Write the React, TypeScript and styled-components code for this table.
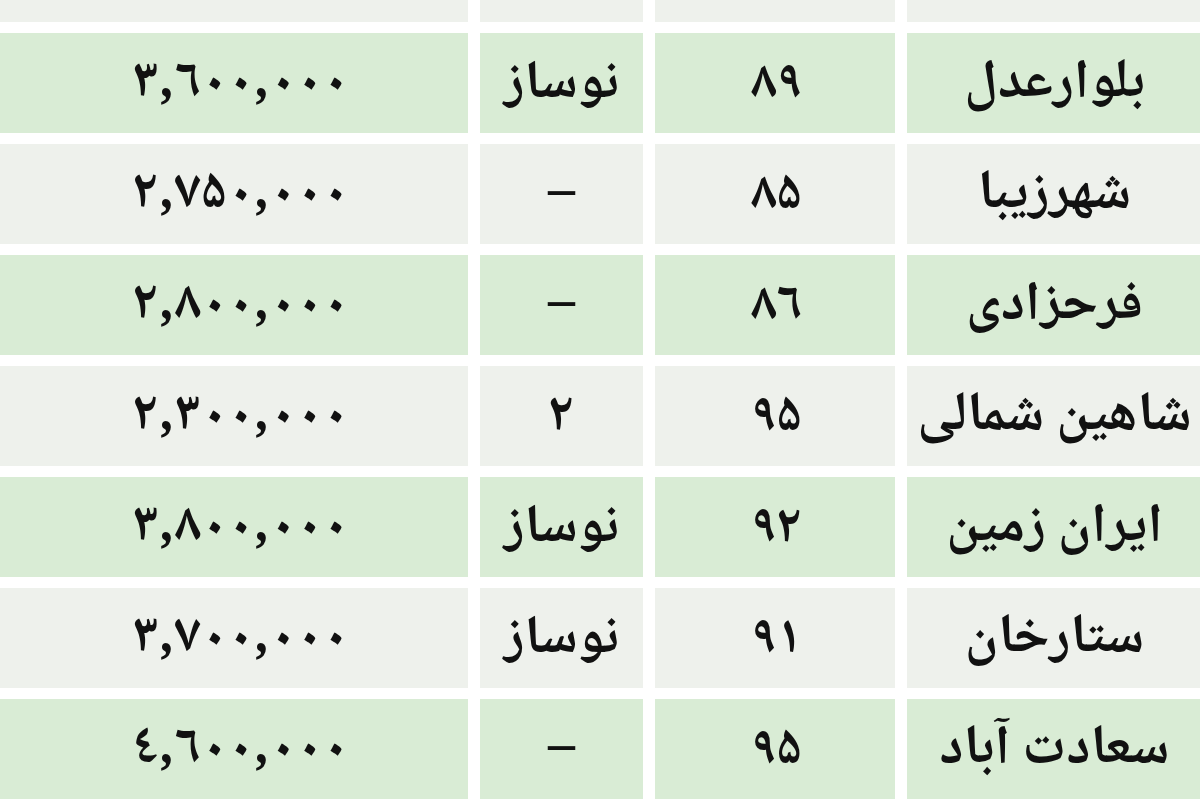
import React from "react";
import styled, { createGlobalStyle } from "styled-components";

const Global = createGlobalStyle`
  html, body {
    margin: 0;
    padding: 0;
    background: #ffffff;
    overflow: hidden;
  }
  body {
    width: 1200px;
    height: 800px;
  }
`;

const Table = styled.div`
  display: flex;
  flex-direction: column;
  gap: 11px;
  width: 1202px;
  margin-top: -78px;
  font-family: "Noto Naskh Arabic", "Noto Sans Arabic", "DejaVu Sans", sans-serif;
  color: #111;
`;

const Row = styled.div<{ $tone: "green" | "gray" }>`
  display: grid;
  grid-template-columns: 468px 163px 240px 295px;
  column-gap: 12px;
  height: 100px;
  --cell: ${(p) => (p.$tone === "green" ? "#d9ecd5" : "#eef1ec")};
`;

const sizes = { price: "54px", status: "54px", year: "53px", place: "55px" };
const spacing = { price: "13px", status: "0", year: "3px", place: "0" };

const Cell = styled.div<{ $kind: "price" | "status" | "year" | "place" }>`
  background: var(--cell);
  display: flex;
  align-items: center;
  justify-content: center;
  direction: rtl;
  font-weight: 700;
  font-size: ${(p) => sizes[p.$kind]};
  line-height: 1;
  white-space: nowrap;
  overflow: hidden;
  padding-top: ${(p) => (p.$kind === "price" ? "2px" : "4px")};
  box-sizing: border-box;
`;

const Spaced = styled.span<{ $gap: string }>`
  direction: ltr;
  unicode-bidi: isolate;
  letter-spacing: ${(p) => p.$gap};
  margin-right: calc(-1 * ${(p) => p.$gap});
`;

type RowData = { price: string; status: string; year: string; place: string };

const rows: RowData[] = [
  { price: "۳,۵۰۰,۰۰۰", status: "نوساز", year: "۹۰", place: "شهرک غرب" },
  { price: "۳,٦۰۰,۰۰۰", status: "نوساز", year: "۸۹", place: "بلوارعدل" },
  { price: "۲,۷۵۰,۰۰۰", status: "–", year: "۸۵", place: "شهرزیبا" },
  { price: "۲,۸۰۰,۰۰۰", status: "–", year: "۸٦", place: "فرحزادی" },
  { price: "۲,۳۰۰,۰۰۰", status: "۲", year: "۹۵", place: "شاهین شمالی" },
  { price: "۳,۸۰۰,۰۰۰", status: "نوساز", year: "۹۲", place: "ایران زمین" },
  { price: "۳,۷۰۰,۰۰۰", status: "نوساز", year: "۹۱", place: "ستارخان" },
  { price: "٤,٦۰۰,۰۰۰", status: "–", year: "۹۵", place: "سعادت آباد" },
];

export default function App() {
  return (
    <>
      <Global />
      <Table>
        {rows.map((r, i) => (
          <Row key={i} $tone={i % 2 === 1 ? "green" : "gray"}>
            <Cell $kind="price">
              <Spaced $gap={spacing.price}>{r.price}</Spaced>
            </Cell>
            <Cell $kind="status">{r.status}</Cell>
            <Cell $kind="year">
              <Spaced $gap={spacing.year}>{r.year}</Spaced>
            </Cell>
            <Cell $kind="place">{r.place}</Cell>
          </Row>
        ))}
      </Table>
    </>
  );
}
